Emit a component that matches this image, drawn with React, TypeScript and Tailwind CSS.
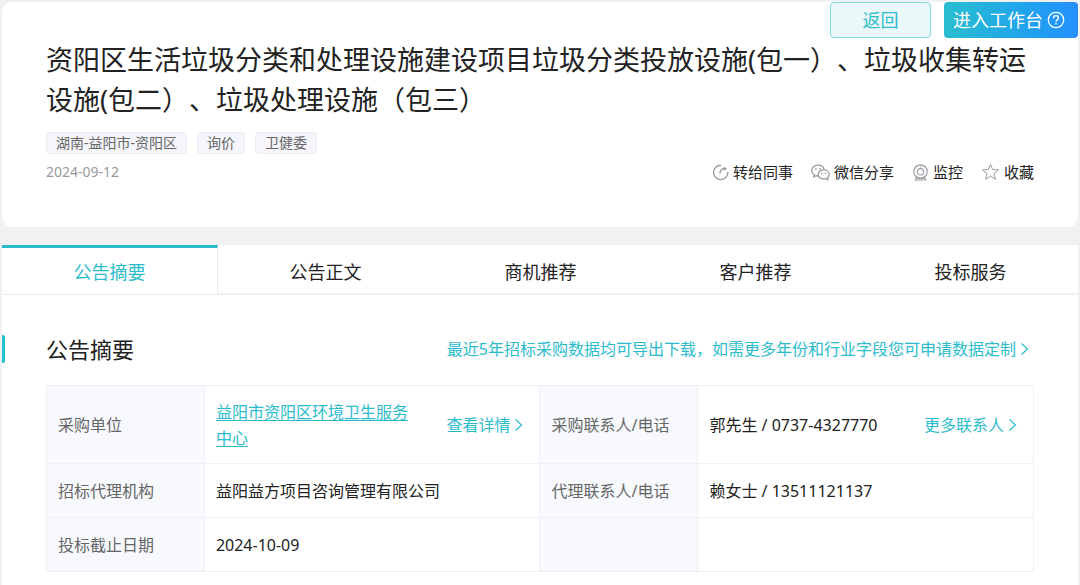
import type { ReactNode } from "react";
import clsx from "clsx";

const tags = ["湖南-益阳市-资阳区", "询价", "卫健委"];
const tabs = ["公告摘要", "公告正文", "商机推荐", "客户推荐", "投标服务"];

const actions = [
  { label: "转给同事", icon: <ForwardIcon /> },
  { label: "微信分享", icon: <WechatIcon /> },
  { label: "监控", icon: <MonitorIcon /> },
  { label: "收藏", icon: <StarIcon /> },
];

export default function App() {
  return (
    <div className="flex min-h-screen flex-col gap-[18px] bg-[#f1f1f3] px-0.5 pt-0.5 font-['Noto_Sans','Noto_Sans_CJK_SC',sans-serif] text-[#222]">
      <NoticeHeader />

      <main className="flex-1 bg-white">
        <TabBar />
        <Summary />
      </main>
    </div>
  );
}

/**
 * Notice title card — page buttons, title, tags, date and share actions.
 */
function NoticeHeader() {
  return (
    <header className="rounded-[10px] bg-white pb-[43px]">
      <div className="flex justify-end gap-[13px]">
        <button
          type="button"
          className="h-9 w-[101px] rounded border border-[#7fd9e0] bg-[#eaf8f9] text-lg leading-none text-[#2dbccd]"
        >
          返回
        </button>
        <button
          type="button"
          className="flex h-9 w-[134px] items-center justify-center gap-1 rounded bg-gradient-to-r from-[#2abdd0] to-[#2490fd] pr-1 text-lg leading-none text-white"
        >
          进入工作台
          <HelpIcon />
        </button>
      </div>

      <div className="px-11">
        <h1 className="mt-0.5 text-[27px] leading-10 [text-spacing-trim:space-all]">
          资阳区生活垃圾分类和处理设施建设项目垃圾分类投放设施(包一）、垃圾收集转运设施(包二）、垃圾处理设施（包三）
        </h1>

        <ul className="mt-3 flex gap-2.5">
          {tags.map((tag) => (
            <li
              key={tag}
              className="rounded border border-[#ebebf3] bg-[#f5f5fb] px-[9px] text-sm leading-5 text-[#666]"
            >
              {tag}
            </li>
          ))}
        </ul>

        <div className="mt-1.5 flex items-center justify-between">
          <time dateTime="2024-09-12" className="text-sm text-[#999]">
            2024-09-12
          </time>
          <div className="flex gap-[18px]">
            {actions.map(({ label, icon }) => (
              <button
                key={label}
                type="button"
                className="flex items-center gap-1 text-[15px] leading-6"
              >
                {icon}
                {label}
              </button>
            ))}
          </div>
        </div>
      </div>
    </header>
  );
}

function TabBar() {
  return (
    <div role="tablist" className="flex h-[50px]">
      {tabs.map((tab, i) => (
        <button
          key={tab}
          type="button"
          role="tab"
          aria-selected={i === 0}
          className={clsx(
            "flex-1 pt-0.5 text-lg leading-none",
            i === 0
              ? "border-t-3 border-r border-b border-t-[#2bbccc] border-r-[#ececee] border-b-[#ececee] text-[#2bbccc]"
              : "border-t-3 border-b-2 border-t-transparent border-b-[#f0f0f2]",
          )}
        >
          {tab}
        </button>
      ))}
    </div>
  );
}

function Summary() {
  return (
    <section className="pt-10 pb-3.5">
      <div className="flex items-center justify-between pr-[49px]">
        <div className="flex items-center">
          <span className="h-7 w-[3px] rounded-r-xs bg-[#24bfcf]" aria-hidden="true" />
          <h2 className="pl-[41px] text-[22px] leading-7">公告摘要</h2>
        </div>
        <ArrowLink>
          最近5年招标采购数据均可导出下载，如需更多年份和行业字段您可申请数据定制
        </ArrowLink>
      </div>

      <div className="mt-[22px] px-11">
        <table className="w-full table-fixed border-collapse text-base leading-[26px]">
          <colgroup>
            <col className="w-[16%]" />
            <col className="w-[34%]" />
            <col className="w-[16%]" />
            <col className="w-[34%]" />
          </colgroup>
          <tbody>
            <tr className="h-[78px]">
              <LabelCell>采购单位</LabelCell>
              <ValueCell>
                <div className="flex items-center justify-between gap-9">
                  <a href="#" className="text-[#2bbccc] underline underline-offset-2">
                    益阳市资阳区环境卫生服务中心
                  </a>
                  <ArrowLink>查看详情</ArrowLink>
                </div>
              </ValueCell>
              <LabelCell>采购联系人/电话</LabelCell>
              <ValueCell>
                <div className="flex items-center justify-between">
                  郭先生 / 0737-4327770
                  <ArrowLink>更多联系人</ArrowLink>
                </div>
              </ValueCell>
            </tr>
            <tr className="h-[54px]">
              <LabelCell>招标代理机构</LabelCell>
              <ValueCell>益阳益方项目咨询管理有限公司</ValueCell>
              <LabelCell>代理联系人/电话</LabelCell>
              <ValueCell>赖女士 / 13511121137</ValueCell>
            </tr>
            <tr className="h-[54px]">
              <LabelCell>投标截止日期</LabelCell>
              <ValueCell>2024-10-09</ValueCell>
              <LabelCell />
              <ValueCell />
            </tr>
          </tbody>
        </table>
      </div>
    </section>
  );
}

function LabelCell({ children }: { children?: ReactNode }) {
  return (
    <th
      scope="row"
      className="border border-[#edf0f6] bg-[#f7f9fd] px-[11px] text-left font-normal text-[#666]"
    >
      {children}
    </th>
  );
}

function ValueCell({ children }: { children?: ReactNode }) {
  return <td className="border border-[#edf0f6] pr-4 pl-[11px]">{children}</td>;
}

/**
 * Teal link with a thin arrow behind it.
 */
function ArrowLink({ children }: { children: ReactNode }) {
  return (
    <a
      href="#"
      className="flex shrink-0 items-center gap-1 text-base leading-[26px] text-[#2bbccc]"
    >
      {children}
      <svg
        viewBox="0 0 9 14"
        className="h-3.5 w-[9px]"
        fill="none"
        stroke="currentColor"
        strokeWidth="1.2"
        aria-hidden="true"
      >
        <path d="M1.5 1.5 7.5 7l-6 5.5" />
      </svg>
    </a>
  );
}

function HelpIcon() {
  return (
    <svg viewBox="0 0 18 18" className="size-[18px]" fill="none" stroke="currentColor" aria-hidden="true">
      <circle cx="9" cy="9" r="7.7" strokeWidth="1.3" />
      <path
        d="M6.5 7.2C6.5 5.6 7.6 4.7 9 4.7s2.5.9 2.5 2.2c0 1.7-2.5 1.8-2.5 3.8"
        strokeWidth="1.3"
      />
      <circle cx="9" cy="12.8" r=".9" fill="currentColor" stroke="none" />
    </svg>
  );
}

function ForwardIcon() {
  return (
    <svg
      viewBox="0 0 17 17"
      className="size-[17px] text-[#9b9ba3]"
      fill="none"
      stroke="currentColor"
      strokeWidth="1.4"
      aria-hidden="true"
    >
      <path d="M9 1.200A7.200 7.200 0 1 0 15.900 8" />
      <path d="M8 9.600C8 6.300 9.600 4.700 12.500 4.700" />
      <path d="M11.800 2.600 15 4.700 11.800 6.800Z" fill="currentColor" stroke="none" />
    </svg>
  );
}

function WechatIcon() {
  return (
    <svg
      viewBox="0 0 19 17"
      className="h-[17px] w-[19px] text-[#9b9ba3]"
      fill="none"
      stroke="currentColor"
      strokeWidth="1.3"
      aria-hidden="true"
    >
      <path d="M7.2 12.1c-.8 0-1.5-.1-2.2-.4l-2.2 1.2.5-2C1.700 9.900.7 8.400.7 6.700.7 3.600 3.500 1.200 7 1.200c3.100 0 5.700 1.900 6.200 4.500" />
      <path d="M12.700 5.900c3.100 0 5.500 2 5.500 4.600 0 1.400-.7 2.600-1.900 3.500l.4 1.700-1.900-1c-.6.2-1.300.3-2.100.3-3.100 0-5.500-2-5.500-4.500s2.400-4.600 5.500-4.600Z" />
      <g fill="currentColor" stroke="none">
        <circle cx="4.900" cy="4.900" r=".9" />
        <circle cx="9.100" cy="4.900" r=".9" />
        <circle cx="10.800" cy="9.400" r=".8" />
        <circle cx="14.500" cy="9.400" r=".8" />
      </g>
    </svg>
  );
}

function MonitorIcon() {
  return (
    <svg
      viewBox="0 0 17 17"
      className="size-[17px] text-[#9b9ba3]"
      fill="none"
      stroke="currentColor"
      strokeWidth="1.2"
      aria-hidden="true"
    >
      <circle cx="8.500" cy="7.500" r="6.700" />
      <circle cx="8.500" cy="7.800" r="3.200" />
      <circle cx="8.500" cy="2.900" r=".7" fill="currentColor" stroke="none" />
      <path d="M4.500 13 3.300 16h10.400l-1.200-3M5.500 14.500h6" />
    </svg>
  );
}

function StarIcon() {
  return (
    <svg
      viewBox="0 0 19 18"
      className="h-[18px] w-[19px] text-[#9b9ba3]"
      fill="none"
      stroke="currentColor"
      strokeWidth="1"
      aria-hidden="true"
    >
      <path d="m9.500 1.300 2.100 5.200 5.900.4-4.500 3.700 1.400 5.700-4.900-3.100-4.900 3.100L6 10.600 1.500 6.900l5.900-.4Z" />
    </svg>
  );
}
